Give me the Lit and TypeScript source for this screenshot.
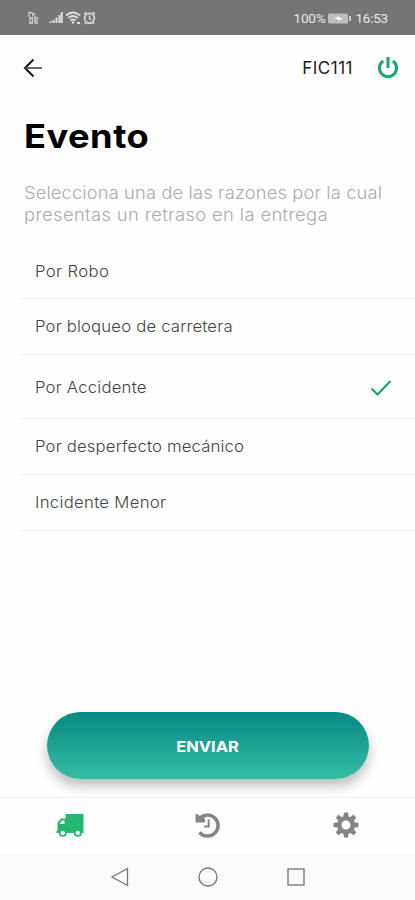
import { LitElement, html, css, svg } from "lit";
import { customElement, state } from "lit/decorators.js";
import { classMap } from "lit/directives/class-map.js";

const teeth = [0, 45, 90, 135, 180, 225, 270, 315];

@customElement("app-root")
export class AppRoot extends LitElement {
  @state() selected = 2;

  reasons = [
    { text: "Por Robo", cls: "r0" },
    { text: "Por bloqueo de carretera", cls: "r1" },
    { text: "Por Accidente", cls: "r2" },
    { text: "Por desperfecto mecánico", cls: "r3" },
    { text: "Incidente Menor", cls: "r4" },
  ];

  static styles = css`
    :host {
      display: flex;
      flex-direction: column;
      height: 900px;
      width: 415px;
      overflow: hidden;
      background: #fefefe;
      font-family: Inter, "Open Sans", sans-serif;
      color: #000;
    }
    * { box-sizing: border-box; }
    svg { display: block; flex: none; }
    .status {
      height: 35px;
      flex: none;
      background: #757575;
      color: #e8e8e8;
      display: flex;
      align-items: center;
      padding: 1px 27px 0 27px;
      font: 13.5px Roboto, sans-serif;
      white-space: nowrap;
    }
    .grow { flex: 1; }
    .batt { margin: 0 4px 0 3px; }
    .pct { letter-spacing: -0.2px; }
    .time { letter-spacing: -0.2px; }
    .top {
      height: 65px;
      flex: none;
      display: flex;
      align-items: center;
      padding: 0 16px 0 23px;
    }
    .unit { font-size: 17px; letter-spacing: 0.5px; margin-right: 24px; color: #1c1c1c; }
    h1 {
      margin: 16px 0 0 24px;
      font-size: 33px;
      line-height: 40px;
      font-weight: 700;
      letter-spacing: 0.4px;
      transform: scaleX(1.1);
      transform-origin: 0 0;
    }
    .sub {
      margin: 26px 0 0 23.500px;
      font-size: 17px;
      line-height: 22px;
      font-weight: 300;
      color: #acacac;
      white-space: nowrap;
      transform: scaleX(1.08);
      transform-origin: 0 0;
    }
    .l1 { letter-spacing: 0.1px; }
    .l2 { letter-spacing: 0.33px; }
    .list { margin: 18px 0 0 21px; }
    .row {
      height: 56px;
      border-bottom: 1px solid #ececec;
      padding: 0 23px 0 14px;
      display: flex;
      align-items: center;
      justify-content: space-between;
      font-size: 15.5px;
      font-weight: 300;
      color: #444;
      white-space: nowrap;
    }
    .row span { transform: scaleX(1.08); transform-origin: 0 0; }
    .r0 { height: 55px; padding-top: 1px; letter-spacing: 0.33px; }
    .r1 { letter-spacing: 0.15px; }
    .r2 { letter-spacing: 0.18px; }
    .r3 { letter-spacing: 0.14px; }
    .r4 { letter-spacing: 0.27px; }
    .row.on { height: 64px; padding-top: 2px; }
    .send {
      margin: auto 46px 18px 47px;
      height: 67px;
      flex: none;
      border: 0;
      border-radius: 34px;
      background: linear-gradient(#078984, #35bda2);
      box-shadow: 0 7px 12px rgba(0, 0, 0, 0.25);
      color: #fff;
      font: 700 15px Inter, sans-serif;
      padding: 2px 0 0;
    }
    .send span { display: inline-block; transform: scaleX(1.1); }
    .tabs {
      height: 57px;
      flex: none;
      border-top: 1px solid #f0f0f0;
      background: #fefefe;
      position: relative;
      display: grid;
      grid-template-columns: 140px 136px 139px;
      align-items: center;
      justify-items: center;
      padding-bottom: 2px;
    }
    .nav {
      height: 46px;
      flex: none;
      background: #fafafa;
      display: flex;
      justify-content: center;
      gap: 68px;
      padding-top: 13px;
    }
  `;

  render() {
    return html`
      <div class="status">
        <svg width="70" height="14" viewBox="0 0 70 14" fill="none" stroke="#dedede">
          <path d="M2 1v5M1.500 1.500h2.500l2 1v3M3 6v6M2 12h3.500v-5h-2M8 5v7h3M8.500 7h3M8.500 9.500h2.500M6 2l2 2" stroke-width="1.300" opacity=".85" />
          <path d="M23.500 12v-1.500M26.500 12V9M29.500 12V6.500M32.500 12V4M34.800 12V1" stroke-width="2" />
          <path d="M39 4.500q7-6 14 0M41.300 7q4.700-4 9.400 0M43.500 9.500q2.500-2 5 0" stroke-width="1.800" />
          <circle cx="46" cy="11.500" r="1.200" fill="#dedede" stroke="none" />
          <path d="M50 12h3" stroke-width="2" />
          <circle cx="62.500" cy="7.300" r="4.900" stroke-width="1.700" />
          <path d="M62.500 4.500v3l2 1.500M57 3l2.500-2M68 3l-2.500-2M59 11.500l-1 1.500M66 11.500l1 1.500" stroke-width="1.400" />
        </svg>
        <span class="grow"></span>
        <span class="pct">100%</span>
        <svg class="batt" width="23" height="11" viewBox="0 0 23 11">
          <rect x="0" y="0.500" width="20" height="10" rx="1.500" fill="#bdbdbd" />
          <path d="M21 3h2v5h-2z" fill="#d0d0d0" />
          <path d="M6 6l5-3v2h4l-5 3V6z" fill="#fff" />
        </svg>
        <span class="time">16:53</span>
      </div>

      <div class="top">
        <svg width="21" height="20" viewBox="0 0 21 20" fill="none" stroke="#111">
          <path d="M10.500 1.500L2 10l8.500 8.500" stroke-width="2" />
          <path d="M2 10h17" stroke-width="1.600" stroke="#444" />
        </svg>
        <span class="grow"></span>
        <span class="unit">FIC111</span>
        <svg width="22" height="24" viewBox="0 0 22 24" fill="none" stroke="#1aa86c" stroke-width="3">
          <path d="M6.200 4.900a8.600 8.600 0 1 0 9.600 0M11 1v11" />
        </svg>
      </div>

      <h1>Evento</h1>
      <div class="sub">
        <div class="l1">Selecciona una de las razones por la cual</div>
        <div class="l2">presentas un retraso en la entrega</div>
      </div>

      <div class="list">
        ${this.reasons.map(
          (r, i) => html`
            <div
              class=${classMap({ row: true, on: i === this.selected, [r.cls]: true })}
              @click=${() => (this.selected = i)}
            >
              <span>${r.text}</span>
              ${i === this.selected
                ? html`<svg width="22" height="18" viewBox="0 0 22 18" fill="none" stroke="#14a36a" stroke-width="2">
                    <path d="M1.500 9.500L7.500 15.500L20.500 2" />
                  </svg>`
                : ""}
            </div>
          `
        )}
      </div>

      <button class="send"><span>ENVIAR</span></button>

      <div class="tabs">
        <svg width="28" height="24" viewBox="0 0 28 24">
          <path d="M9.500 1H27.500V20H0.500V18L1.500 17V10L5 5.500H9.500z" fill="#25b770" />
          <path d="M3.500 11L6 7.500H8.500V11z" fill="#fff" />
          <circle cx="6.800" cy="20" r="3" fill="#fff" stroke="#25b770" stroke-width="1.700" />
          <circle cx="21.800" cy="20" r="3" fill="#fff" stroke="#25b770" stroke-width="1.700" />
        </svg>
        <svg width="26" height="26" viewBox="0 0 26 26" fill="none" stroke="#858585">
          <path d="M4 7.500A10.500 10.500 0 1 1 4.500 20.300" stroke-width="3.500" />
          <path d="M0.500 1.500L3.500 3L10 7V10.500H0.500z" fill="#858585" stroke="none" />
          <path d="M13.700 7.500V14.500H9" stroke-width="2" />
        </svg>
        <svg width="26" height="26" viewBox="0 0 26 26">
          <g fill="#858585">
            ${teeth.map((a) => svg`<path d="M10.300 5L11 0.500H15L15.700 5z" transform="rotate(${a} 13 13)" />`)}
          </g>
          <circle cx="13" cy="13" r="6.800" fill="none" stroke="#858585" stroke-width="4.600" />
        </svg>
      </div>

      <div class="nav">
        <svg width="20" height="20" viewBox="0 0 20 20" fill="none" stroke="#747474" stroke-width="1.300">
          <path d="M17.500 1.500V18.500L2 10z" />
        </svg>
        <svg width="20" height="20" viewBox="0 0 20 20" fill="none" stroke="#747474" stroke-width="1.300">
          <circle cx="10" cy="10" r="9" />
        </svg>
        <svg width="20" height="20" viewBox="0 0 20 20" fill="none" stroke="#747474" stroke-width="1.300">
          <rect x="2" y="2" width="16" height="16" />
        </svg>
      </div>
    `;
  }
}
